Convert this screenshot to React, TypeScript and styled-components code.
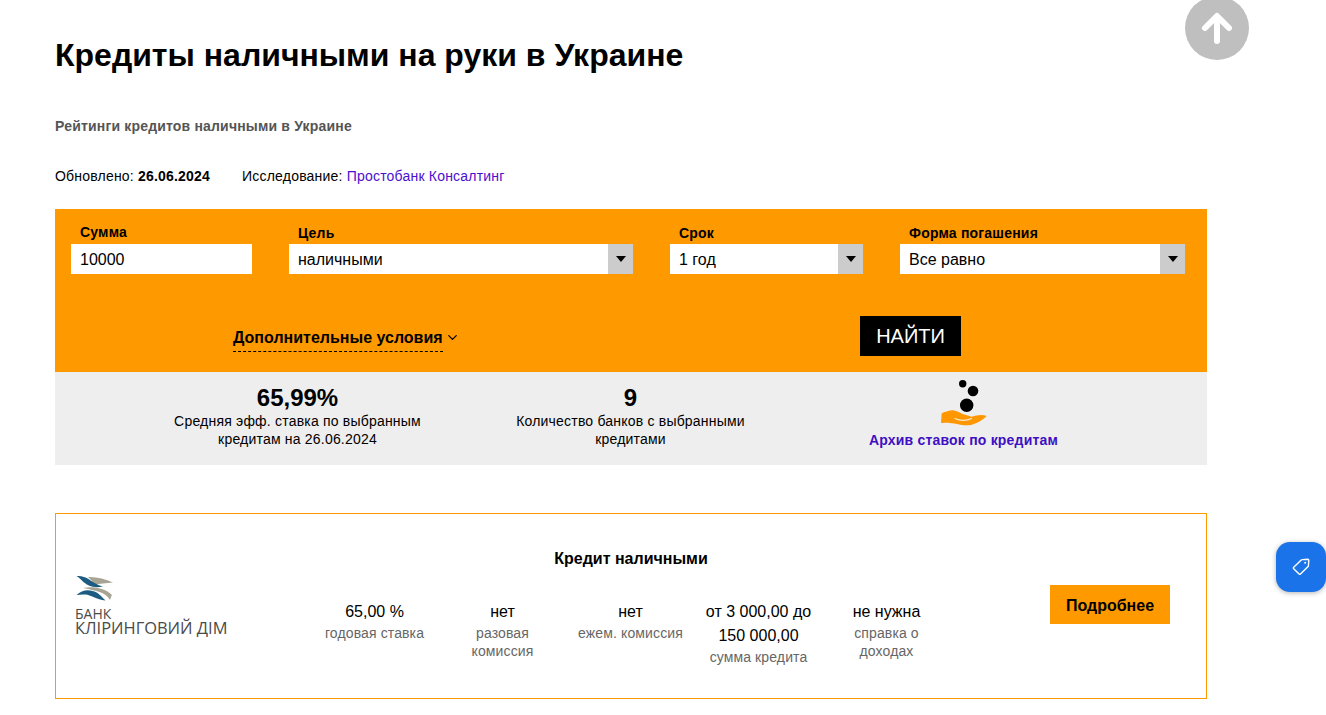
import React, { FC } from "react";
import styled, { createGlobalStyle } from "styled-components";
import { ChevronDown } from "lucide-react";

const GlobalStyle = createGlobalStyle`
  html, body {
    margin: 0;
    padding: 0;
    background: #fff;
    color: #000;
    font-family: "Liberation Sans", Arial, sans-serif;
    overflow: hidden;
    height: 100%;
  }
`;

const metrics = [
  { value: ["65,00 %"], caption: "годовая ставка" },
  { value: ["нет"], caption: "разовая комиссия" },
  { value: ["нет"], caption: "ежем. комиссия" },
  { value: ["от 3 000,00 до", "150 000,00"], caption: "сумма кредита" },
  { value: ["не нужна"], caption: "справка о доходах" },
];

const App: FC = () => {
  return (
    <>
      <GlobalStyle />
      <Page>
        <Title>Кредиты наличными на руки в Украине</Title>
        <Subtitle>Рейтинги кредитов наличными в Украине</Subtitle>
        <MetaRow>
          <span>
            Обновлено: <b>26.06.2024</b>
          </span>
          <span>
            Исследование: <MetaLink href="#">Простобанк Консалтинг</MetaLink>
          </span>
        </MetaRow>

        <Filter>
          <Fields>
            <Field $width={181}>
              <FieldLabel $shift={0}>Сумма</FieldLabel>
              <Control>
                <ControlValue>10000</ControlValue>
              </Control>
            </Field>
            <Field $width={344}>
              <FieldLabel $shift={1}>Цель</FieldLabel>
              <Select value="наличными" />
            </Field>
            <Field $width={193}>
              <FieldLabel $shift={1}>Срок</FieldLabel>
              <Select value="1 год" />
            </Field>
            <Field $width={285}>
              <FieldLabel $shift={1}>Форма погашения</FieldLabel>
              <Select value="Все равно" />
            </Field>
          </Fields>
          <FilterActions>
            <MoreToggle>
              <MoreText>Дополнительные условия</MoreText>
              <MoreChevron size={15} />
            </MoreToggle>
            <SearchButton>НАЙТИ</SearchButton>
          </FilterActions>
        </Filter>

        <Summary>
          <SummaryItem>
            <SummaryValue>65,99%</SummaryValue>
            <SummaryText>
              Средняя эфф. ставка по выбранным кредитам на 26.06.2024
            </SummaryText>
          </SummaryItem>
          <SummaryItem>
            <SummaryValue>9</SummaryValue>
            <SummaryText>Количество банков с выбранными кредитами</SummaryText>
          </SummaryItem>
          <ArchiveItem>
            <HandIcon />
            <ArchiveLink href="#">Архив ставок по кредитам</ArchiveLink>
          </ArchiveItem>
        </Summary>

        <Card>
          <CardTitle>Кредит наличными</CardTitle>
          <CardBody>
            <BankLogo />
            <Metrics>
              {metrics.map((m) => (
                <Metric key={m.caption}>
                  {m.value.map((line) => (
                    <MetricValue key={line}>{line}</MetricValue>
                  ))}
                  <MetricCaption>{m.caption}</MetricCaption>
                </Metric>
              ))}
            </Metrics>
            <MoreButton>Подробнее</MoreButton>
          </CardBody>
        </Card>
      </Page>

      <ScrollTop aria-label="Наверх">
        <svg width="34" height="34" viewBox="0 0 34 34" fill="none">
          <path
            d="M17 30V6M5 17L17 5l12 12"
            stroke="#fff"
            strokeWidth="6"
            strokeLinecap="round"
            strokeLinejoin="round"
          />
        </svg>
      </ScrollTop>
      <TagButton aria-label="Скидки">
        <svg width="20" height="20" viewBox="0 0 20 20" fill="none">
          <path
            d="M11.2 2.6l5.6-.4c.6 0 1 .4 1 1l-.4 5.6c0 .3-.1.5-.3.7l-7.6 7.6c-.4.4-1 .4-1.4 0l-5.4-5.4c-.4-.4-.4-1 0-1.4l7.8-7.5c.2-.1.4-.2.7-.2z"
            stroke="#fff"
            strokeWidth="1.4"
            strokeLinejoin="round"
          />
          <circle cx="14.2" cy="5.8" r="1" fill="#fff" />
        </svg>
      </TagButton>
    </>
  );
};

const Select: FC<{ value: string }> = ({ value }) => (
  <Control>
    <ControlValue>{value}</ControlValue>
    <Arrow>
      <ArrowGlyph />
    </Arrow>
  </Control>
);

const HandIcon: FC = () => (
  <HandSvg width="48" height="52" viewBox="0 0 48 52" fill="none">
    <circle cx="23.7" cy="4.7" r="3.7" fill="#000" />
    <circle cx="34" cy="12" r="5.3" fill="#000" />
    <circle cx="27.7" cy="26.3" r="6.7" fill="#000" />
    <path
      d="M2.7 34.3C7 32.5 11 31 14.3 31.3c4 .4 7 3 10 4 3 .8 6 1.6 8.4 2.4 5-1.4 10-2.6 15-.7-3 3.4-11 8.8-18.4 9.3-8 .4-13-2.6-23.3-2.6l-4 .3z"
      fill="#ff9800"
    />
    <path
      d="M16 39.500c5 2.600 12 2.400 16.500 0"
      stroke="#fbe9cf"
      strokeWidth="1.2"
      strokeLinecap="round"
    />
  </HandSvg>
);

const BankLogo: FC = () => (
  <LogoSvg width="160" height="68" viewBox="0 0 160 68" fill="none">
    <path d="M13 2c8-.5 17 2 25 5.500-7 .5-13 1-19 2.500C18 7 16 4.500 13 2z" fill="#a8a494" />
    <path d="M8 13c8-1.500 21-1 29 7-1 1-1 3-2 5-3-6-10-8-16-9.500C15 14.500 12 13.500 8 13z" fill="#a8a494" />
    <path d="M1.500 1c9-1 14 5 21 8.500 2 1 4 1.800 5.500 2.100-10 1.800-15-1-19-4C7 5.500 4.500 3 1.500 1z" fill="#1c5c82" />
    <path d="M1.500 20c6-6 14-6 21-2 3 2 5 5 8 7.500-9-1-15-5.500-20-6-3-.3-6 0-9 .5z" fill="#1c5c82" />
    <LogoSmall x="0" y="44">БАНК</LogoSmall>
    <LogoLarge x="0" y="59">КЛІРИНГОВИЙ ДІМ</LogoLarge>
  </LogoSvg>
);

const Page = styled.div`
  width: 1152px;
  margin-left: 55px;
`;

const Title = styled.h1`
  margin: 0;
  padding-top: 37px;
  font-size: 32px;
  line-height: 36px;
  font-weight: 700;
`;

const Subtitle = styled.h2`
  margin: 45px 0 0;
  font-size: 14px;
  line-height: 16px;
  font-weight: 700;
  letter-spacing: 0.18px;
  color: #555;
`;

const MetaRow = styled.div`
  display: flex;
  gap: 32px;
  margin-top: 34px;
  font-size: 14px;
  line-height: 16px;
  letter-spacing: 0.2px;
`;

const MetaLink = styled.a`
  color: #4b0fd0;
  text-decoration: none;
`;

const Filter = styled.section`
  margin-top: 25px;
  height: 163px;
  box-sizing: border-box;
  padding: 14px 22px 0 16px;
  background: #ff9900;
`;

const Fields = styled.div`
  display: flex;
  gap: 37px;
`;

const Field = styled.div<{ $width: number }>`
  width: ${(p) => p.$width}px;
`;

const FieldLabel = styled.div<{ $shift: number }>`
  height: 21px;
  padding: ${(p) => p.$shift}px 0 0 9px;
  box-sizing: border-box;
  font-size: 14px;
  line-height: 18px;
  font-weight: 700;
  letter-spacing: 0.2px;
`;

const Control = styled.div`
  display: flex;
  align-items: center;
  justify-content: space-between;
  height: 30px;
  background: #fff;
`;

const ControlValue = styled.span`
  padding: 1px 0 0 9px;
  font-size: 16px;
`;

const Arrow = styled.span`
  display: flex;
  align-items: center;
  justify-content: center;
  width: 25px;
  height: 100%;
  background: #ccc;
`;

const ArrowGlyph = styled.i`
  width: 0;
  height: 0;
  border-left: 5.5px solid transparent;
  border-right: 5.5px solid transparent;
  border-top: 6px solid #000;
`;

const FilterActions = styled.div`
  display: flex;
  align-items: flex-start;
  margin-top: 42px;
  padding-left: 162px;
`;

const MoreToggle = styled.div`
  display: flex;
  align-items: flex-start;
  gap: 2px;
  width: 627px;
  padding-top: 13px;
`;

const MoreText = styled.span`
  font-size: 16px;
  font-weight: 700;
  line-height: 18px;
  padding-bottom: 4px;
  border-bottom: 1px dashed #000;
`;

const MoreChevron = styled(ChevronDown)`
  margin-top: 1px;
  stroke-width: 2;
`;

const SearchButton = styled.button`
  width: 101px;
  height: 40px;
  padding: 0;
  border: 0;
  background: #000;
  color: #fff;
  font-family: inherit;
  font-size: 20px;
`;

const Summary = styled.section`
  display: grid;
  grid-template-columns: repeat(3, 333px);
  height: 93px;
  padding: 13px 0 0 76px;
  box-sizing: border-box;
  background: #eee;
`;

const SummaryItem = styled.div`
  display: flex;
  flex-direction: column;
  align-items: center;
  text-align: center;
`;

const SummaryValue = styled.div`
  font-size: 24px;
  line-height: 25px;
  margin-bottom: 2px;
  font-weight: 700;
`;

const SummaryText = styled.div`
  width: 252px;
  font-size: 14px;
  line-height: 18px;
  letter-spacing: 0.2px;
`;

const ArchiveItem = styled(SummaryItem)`
  margin-top: -6px;
`;

const HandSvg = styled.svg`
  margin-left: -2px;
`;

const ArchiveLink = styled.a`
  font-size: 14px;
  line-height: 18px;
  font-weight: 700;
  letter-spacing: 0.2px;
  color: #3f0fc4;
  text-decoration: none;
`;

const Card = styled.article`
  margin-top: 48px;
  height: 186px;
  box-sizing: border-box;
  border: 1px solid #ff9900;
  padding-top: 35px;
`;

const CardTitle = styled.div`
  text-align: center;
  font-size: 16px;
  line-height: 20px;
  font-weight: 700;
`;

const CardBody = styled.div`
  display: flex;
  align-items: flex-start;
  margin-top: 6px;
  padding-left: 19px;
`;

const LogoSvg = styled.svg`
  flex: none;
  width: 160px;
  margin-right: 75.5px;
`;

const LogoSmall = styled.text`
  font-family: "Open Sans", sans-serif;
  font-size: 14px;
  fill: #4a4a4a;
`;

const LogoLarge = styled.text`
  font-family: "Open Sans", sans-serif;
  font-size: 16.45px;
  fill: #4a4a4a;
`;

const Metrics = styled.div`
  display: grid;
  grid-template-columns: repeat(5, 128px);
  width: 640px;
  padding-top: 25px;
`;

const Metric = styled.div`
  padding: 0 9px;
  text-align: center;
`;

const MetricValue = styled.div`
  font-size: 16px;
  line-height: 24px;
  margin: 0 -9px;
`;

const MetricCaption = styled.div`
  font-size: 14px;
  line-height: 18px;
  letter-spacing: 0.12px;
  color: #666;
`;

const MoreButton = styled.button`
  width: 120px;
  height: 39px;
  margin: 10px 0 0 99.5px;
  padding: 2px 0 0;
  border: 0;
  background: #ff9900;
  color: #000;
  font-family: inherit;
  font-size: 16px;
  font-weight: 700;
`;

const ScrollTop = styled.button`
  position: fixed;
  left: 1185px;
  top: -4px;
  display: flex;
  align-items: center;
  justify-content: center;
  width: 64px;
  height: 64px;
  padding: 0;
  border: 0;
  border-radius: 50%;
  background: #bfbfbf;
`;

const TagButton = styled.button`
  position: fixed;
  left: 1276px;
  top: 542px;
  display: flex;
  align-items: center;
  justify-content: center;
  width: 50px;
  height: 50px;
  padding: 0;
  border: 0;
  border-radius: 14px;
  background: #1a73e8;
  box-shadow: 0 1px 5px rgba(0, 0, 0, 0.3);
`;

export default App;
